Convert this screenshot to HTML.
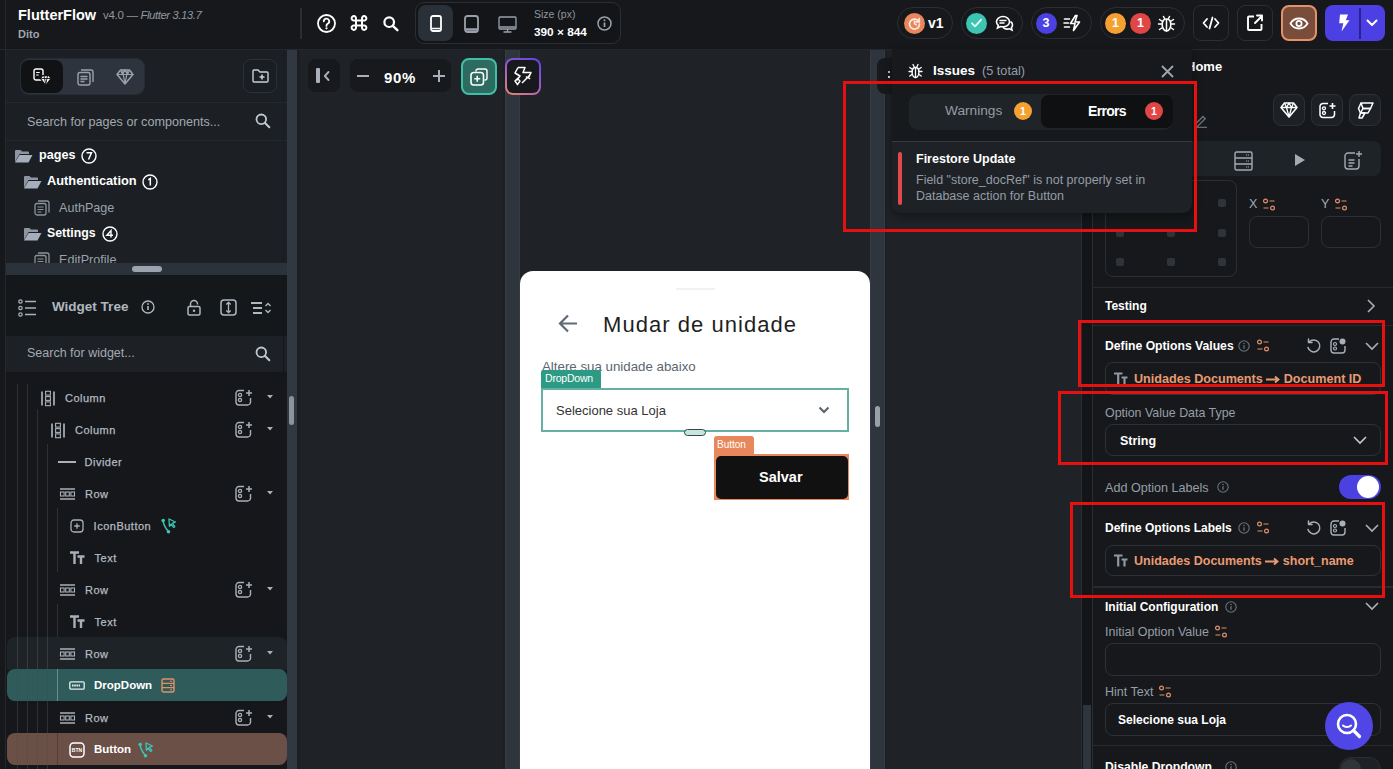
<!DOCTYPE html>
<html>
<head>
<meta charset="utf-8">
<style>
*{box-sizing:border-box;margin:0;padding:0}
html,body{width:1393px;height:769px;overflow:hidden;background:#16181b;font-family:"Liberation Sans",sans-serif;color:#fff}
.a{position:absolute}
.t{position:absolute;white-space:nowrap;line-height:1}
svg{position:absolute;overflow:visible}
</style>
</head>
<body>
<!-- TOP BAR -->
<div class="a" style="left:0;top:0;width:1393px;height:50px;background:#16181b;border-bottom:1px solid #24282d"></div>
<div class="a" style="left:5px;top:0;width:1px;height:769px;background:#25292e"></div>

<!-- LEFT PANEL -->
<div class="a" style="left:6px;top:50px;width:281px;height:213px;background:#1c2024"></div>
<div class="a" style="left:6px;top:102px;width:281px;height:1px;background:#24292e"></div>
<div class="a" style="left:6px;top:140px;width:281px;height:1px;background:#22272b"></div>
<div class="a" style="left:6px;top:263px;width:281px;height:12px;background:#2b323a"></div>
<div class="a" style="left:132px;top:266px;width:30px;height:6px;border-radius:3px;background:#9aa3ae"></div>
<div class="a" style="left:6px;top:275px;width:281px;height:61px;background:#15181b"></div>
<div class="a" style="left:6px;top:336px;width:281px;height:36px;background:#1d2125"></div>
<div class="a" style="left:6px;top:372px;width:281px;height:397px;background:#15171a"></div>
<div class="a" style="left:283px;top:50px;width:1px;height:213px;background:#181b1f"></div>
<div class="a" style="left:283px;top:275px;width:1px;height:97px;background:#121417"></div>
<!-- left scroll strip -->
<div class="a" style="left:287px;top:50px;width:10px;height:719px;background:#313842"></div>
<div class="a" style="left:289px;top:396px;width:5px;height:29px;border-radius:3px;background:#8b939d"></div>

<!-- CANVAS -->
<div class="a" style="left:297px;top:50px;width:785px;height:719px;background:#1f2327"></div>
<div class="a" style="left:297px;top:50px;width:3px;height:719px;background:#1b1f23"></div>
<div class="a" style="left:503px;top:50px;width:2px;height:719px;background:#1c2024"></div><div class="a" style="left:505px;top:50px;width:15px;height:719px;background:#2e353d;box-shadow:inset 1px 0 0 #353c45,inset -1px 0 0 #353c45"></div>
<div class="a" style="left:870px;top:50px;width:15px;height:719px;background:#2e353d;box-shadow:inset 1px 0 0 #353c45,inset -1px 0 0 #353c45"></div><div class="a" style="left:885px;top:50px;width:2px;height:719px;background:#1c2024"></div>
<div class="a" style="left:875px;top:406px;width:5px;height:21px;border-radius:3px;background:#9aa0a8"></div>
<div class="a" style="left:520px;top:271px;width:350px;height:520px;border-radius:13px;background:#fff"></div>

<!-- RIGHT PANEL -->
<div class="a" style="left:1081px;top:50px;width:1px;height:719px;background:#2a2e33"></div>
<div class="a" style="left:1082px;top:50px;width:10px;height:719px;background:#131518"></div>
<div class="a" style="left:1092px;top:50px;width:1px;height:719px;background:#2a2e33"></div>
<div class="a" style="left:1093px;top:50px;width:300px;height:719px;background:#16181b"></div>


<!-- TOPBAR CONTENT -->
<div class="t" style="left:18px;top:8px;font-size:14.5px;font-weight:700;color:#fff">FlutterFlow</div>
<div class="t" style="left:103px;top:10px;font-size:11.5px;color:#8f969e;letter-spacing:-0.3px">v4.0 — <i style="letter-spacing:-0.5px">Flutter 3.13.7</i></div>
<div class="t" style="left:18px;top:29px;font-size:11px;font-weight:700;color:#9ea5ae">Dito</div>
<div class="a" style="left:300px;top:8px;width:2px;height:31px;background:#2a2e33"></div>
<!-- help -->
<svg style="left:317px;top:14px" width="19" height="19" viewBox="0 0 19 19"><circle cx="9.5" cy="9.5" r="8.5" fill="none" stroke="#fff" stroke-width="1.8"/><path d="M6.8 7.3a2.7 2.7 0 1 1 3.9 2.4c-.8.4-1.2.9-1.2 1.7v.5" fill="none" stroke="#fff" stroke-width="1.8" stroke-linecap="round"/><circle cx="9.5" cy="14.3" r="1.1" fill="#fff"/></svg>
<!-- cmd -->
<svg style="left:350px;top:15px" width="18" height="16" viewBox="0 0 18 16"><path d="M6 5.5h6v5H6zM6 5.5V3.5a2.2 2.2 0 1 0-2.2 2H6M12 5.5V3.5a2.2 2.2 0 1 1 2.2 2H12M6 10.5v2a2.2 2.2 0 1 1-2.2-2H6M12 10.5v2a2.2 2.2 0 1 0 2.2-2H12" fill="none" stroke="#fff" stroke-width="2"/></svg>
<!-- search -->
<svg style="left:383px;top:16px" width="16" height="15" viewBox="0 0 16 15"><circle cx="6.2" cy="6.2" r="4.8" fill="none" stroke="#fff" stroke-width="2.2"/><path d="M9.8 9.8l4.6 4.4" stroke="#fff" stroke-width="2.4" stroke-linecap="round"/></svg>
<!-- device box -->
<div class="a" style="left:415px;top:2px;width:206px;height:42px;border-radius:9px;border:1.5px solid #2b2f35;background:#131518"></div>
<div class="a" style="left:418px;top:5px;width:35px;height:36px;border-radius:8px;background:#2a3038"></div>
<svg style="left:430px;top:15px" width="12" height="17" viewBox="0 0 12 17"><rect x="1" y="1" width="10" height="15" rx="2" fill="none" stroke="#fff" stroke-width="1.8"/><path d="M1.5 13.5h9" stroke="#fff" stroke-width="1.5"/></svg>
<svg style="left:464px;top:15px" width="15" height="18" viewBox="0 0 15 18"><rect x="1" y="1" width="13" height="16" rx="2.5" fill="none" stroke="#9aa1aa" stroke-width="1.8"/><path d="M1.5 14.5h12" stroke="#9aa1aa" stroke-width="2.5"/></svg>
<svg style="left:498px;top:16px" width="19" height="17" viewBox="0 0 19 17"><rect x="1" y="1" width="17" height="12" rx="1" fill="none" stroke="#9aa1aa" stroke-width="1.3"/><path d="M1.5 11h16M9.5 13v2.5M5.5 16h8" stroke="#9aa1aa" stroke-width="1.3"/></svg>
<div class="t" style="left:534px;top:9px;font-size:10.5px;color:#8f969e">Size (px)</div>
<div class="t" style="left:534px;top:27px;font-size:11.8px;font-weight:700;color:#fff">390 × 844</div>
<svg style="left:597px;top:16px" width="15" height="15" viewBox="0 0 15 15"><circle cx="7.5" cy="7.5" r="6.5" fill="none" stroke="#9aa1aa" stroke-width="1.5"/><path d="M7.5 6.5v4.5" stroke="#9aa1aa" stroke-width="1.8"/><circle cx="7.5" cy="4.3" r="1" fill="#9aa1aa"/></svg>

<!-- pills -->
<div class="a" style="left:897px;top:7px;width:56px;height:32px;border-radius:16px;border:1.5px solid #2a2e33"></div>
<div class="a" style="left:904px;top:12.5px;width:21px;height:21px;border-radius:50%;background:#e8865c"></div>
<svg style="left:908px;top:16.5px" width="13" height="13" viewBox="0 0 13 13"><path d="M10.8 4.5A5 5 0 1 0 11.5 7" fill="none" stroke="#fce8df" stroke-width="1.7" stroke-linecap="round"/><path d="M11.3 1.5v3.3H8" fill="none" stroke="#fce8df" stroke-width="1.7" stroke-linecap="round" stroke-linejoin="round"/><path d="M6.5 4v2.7l1.8 1.2" fill="none" stroke="#fce8df" stroke-width="1.5" stroke-linecap="round"/></svg>
<div class="t" style="left:928px;top:16px;font-size:14px;font-weight:700;color:#fff">v1</div>

<div class="a" style="left:961px;top:7px;width:62px;height:32px;border-radius:16px;border:1.5px solid #2a2e33"></div>
<div class="a" style="left:966px;top:12.5px;width:21px;height:21px;border-radius:50%;background:#3cc5b3"></div>
<svg style="left:970px;top:17px" width="13" height="12" viewBox="0 0 13 12"><path d="M2 6.3l3 3 6-6.5" fill="none" stroke="#e8fbf8" stroke-width="1.9" stroke-linecap="round" stroke-linejoin="round"/></svg>
<svg style="left:995px;top:15px" width="19" height="18" viewBox="0 0 19 18"><path d="M8 1.5c3.6 0 6.5 2.3 6.5 5.2s-2.9 5.2-6.5 5.2c-.8 0-1.6-.1-2.3-.3L2.5 13l.8-2.6C2.2 9.4 1.5 8.1 1.5 6.7 1.5 3.8 4.4 1.5 8 1.5z" fill="none" stroke="#fff" stroke-width="1.6"/><path d="M5 5.5h6M5 8h4" stroke="#fff" stroke-width="1.5" stroke-linecap="round"/><path d="M15.5 6.5c1.3.9 2 2.1 2 3.5 0 1-.4 1.9-1.1 2.7l.6 2.3-2.7-1.2c-.6.2-1.3.3-2 .3-1.7 0-3.2-.6-4.2-1.6" fill="none" stroke="#fff" stroke-width="1.6"/></svg>

<div class="a" style="left:1031px;top:7px;width:61px;height:32px;border-radius:16px;border:1.5px solid #2a2e33"></div>
<div class="a" style="left:1036px;top:12.5px;width:21px;height:21px;border-radius:50%;background:#4b40e2"></div>
<div class="t" style="left:1042.5px;top:17px;font-size:12.5px;font-weight:700;color:#fff">3</div>
<svg style="left:1063px;top:14px" width="20" height="18" viewBox="0 0 20 18"><path d="M12.5 1.5L7.5 9.5h4.5l-1.5 7 6-8.5h-4.5l2-6.5z" fill="none" stroke="#fff" stroke-width="1.6" stroke-linejoin="round"/><path d="M1.5 5h5M1 9h4.5M1.5 13h5" stroke="#fff" stroke-width="1.6" stroke-linecap="round"/></svg>

<div class="a" style="left:1100px;top:7px;width:85px;height:32px;border-radius:16px;border:1.5px solid #2a2e33"></div>
<div class="a" style="left:1105px;top:12.5px;width:21px;height:21px;border-radius:50%;background:#f5a132"></div>
<div class="t" style="left:1112px;top:17px;font-size:12.5px;font-weight:700;color:#fff">1</div>
<div class="a" style="left:1130px;top:12.5px;width:21px;height:21px;border-radius:50%;background:#e04646"></div>
<div class="t" style="left:1137px;top:17px;font-size:12.5px;font-weight:700;color:#fff">1</div>
<svg style="left:1157px;top:14px" width="19" height="19" viewBox="0 0 19 19"><path d="M9.5 5c2.5 0 4.3 2.2 4.3 5.5s-1.8 6.5-4.3 6.5-4.3-3.2-4.3-6.5S7 5 9.5 5z" fill="none" stroke="#fff" stroke-width="1.6"/><path d="M9.5 6v11M6.5 2.5l1.3 2.5M12.5 2.5l-1.3 2.5M1.5 10h3.7M13.8 10h3.7M2.5 5.5l3 2M16.5 5.5l-3 2M2.5 15.5l3-2M16.5 15.5l-3-2" stroke="#fff" stroke-width="1.5" stroke-linecap="round"/></svg>

<div class="a" style="left:1193px;top:5px;width:36px;height:36px;border-radius:8px;border:1.5px solid #2a2e33"></div>
<svg style="left:1202px;top:16px" width="18" height="14" viewBox="0 0 18 14"><path d="M5 3L1.5 7 5 11M13 3l3.5 4L13 11M10.5 1.5l-3 11" fill="none" stroke="#fff" stroke-width="1.8" stroke-linecap="round" stroke-linejoin="round"/></svg>
<div class="a" style="left:1237px;top:5px;width:36px;height:36px;border-radius:8px;border:1.5px solid #2a2e33"></div>
<svg style="left:1246px;top:14px" width="18" height="18" viewBox="0 0 18 18"><path d="M8 2.5H3a1 1 0 0 0-1 1v11.5a1 1 0 0 0 1 1h11.5a1 1 0 0 0 1-1V10" fill="none" stroke="#fff" stroke-width="1.9"/><path d="M9 9l7-7M11 1.5h5v5" fill="none" stroke="#fff" stroke-width="1.9" stroke-linecap="round" stroke-linejoin="round"/></svg>
<div class="a" style="left:1281px;top:5px;width:36px;height:36px;border-radius:8px;border:2px solid #e3936c;background:#7a4d3b"></div>
<svg style="left:1289px;top:17px" width="20" height="13" viewBox="0 0 20 13"><path d="M1.5 6.5C3.5 3 6.5 1.5 10 1.5s6.5 1.5 8.5 5c-2 3.5-5 5-8.5 5s-6.5-1.5-8.5-5z" fill="none" stroke="#fff" stroke-width="1.8"/><circle cx="10" cy="6.5" r="2.6" fill="none" stroke="#fff" stroke-width="1.8"/></svg>
<div class="a" style="left:1325px;top:5px;width:60px;height:36px;border-radius:8px;background:#4c40e4"></div>
<div class="a" style="left:1359px;top:8px;width:1.5px;height:31px;background:#2a228a"></div>
<svg style="left:1338px;top:14px" width="12" height="18" viewBox="0 0 12 18"><path d="M2 0.5h8L7.8 6.2H11.5L3.5 17.5 5.3 9.3H1.2z" fill="#fff"/></svg>
<svg style="left:1366px;top:19px" width="12" height="8" viewBox="0 0 12 8"><path d="M1.5 1.5L6 6l4.5-4.5" fill="none" stroke="#fff" stroke-width="2" stroke-linecap="round" stroke-linejoin="round"/></svg>


<!-- LEFT PANEL CONTENT -->
<div class="a" style="left:20px;top:58px;width:125px;height:37px;border-radius:9px;background:#2d343d;border:1px solid #262c33"></div>
<div class="a" style="left:21px;top:60px;width:42px;height:33px;border-radius:8px;background:#101214"></div>
<svg style="left:33px;top:68px" width="19" height="19" viewBox="0 0 19 19"><rect x="1" y="1" width="9" height="11" rx="2" fill="none" stroke="#fff" stroke-width="1.4"/><path d="M3.2 4.5h3.5M3.2 7h2.5" stroke="#fff" stroke-width="1.2"/><path d="M7.5 10.5l2-2.8h6.5l2 2.8-5.3 7z" fill="#fff" stroke="#101214" stroke-width="1.2"/><path d="M8.3 10.5h9M11 7.8l1.8 9M14.5 7.8l-1.8 9" stroke="#101214" stroke-width="0.9"/></svg>
<svg style="left:77px;top:69px" width="17" height="17" viewBox="0 0 17 17"><rect x="1" y="3.5" width="12" height="12.5" rx="2" fill="none" stroke="#9aa1aa" stroke-width="1.4"/><path d="M4 1h10a2 2 0 0 1 2 2v10" fill="none" stroke="#9aa1aa" stroke-width="1.4"/><path d="M3.5 7.5h7M3.5 10h7M3.5 12.5h4" stroke="#9aa1aa" stroke-width="1.3"/></svg>
<svg style="left:116px;top:69px" width="18" height="16" viewBox="0 0 18 16"><path d="M1 5.5L4.5 1h9L17 5.5 9 15z" fill="none" stroke="#9aa1aa" stroke-width="1.5" stroke-linejoin="round"/><path d="M1 5.5h16M6.5 1.5L9 15M11.5 1.5L9 15M4.5 1l2 4.5 2.5-4.5 2.5 4.5 2-4.5" fill="none" stroke="#9aa1aa" stroke-width="1.2" stroke-linejoin="round"/></svg>
<div class="a" style="left:243px;top:59px;width:34px;height:34px;border-radius:8px;border:1.5px solid #2c3138;background:#1a1e22"></div>
<svg style="left:252px;top:69px" width="17" height="14" viewBox="0 0 17 14"><path d="M1 2a1 1 0 0 1 1-1h4l2 2h7a1 1 0 0 1 1 1v8a1 1 0 0 1-1 1H2a1 1 0 0 1-1-1z" fill="none" stroke="#c8ced6" stroke-width="1.4"/><path d="M10 5.5v5M7.5 8h5" stroke="#c8ced6" stroke-width="1.6"/></svg>
<div class="t" style="left:27px;top:116px;font-size:12.6px;color:#a2a9b2">Search for pages or components...</div>
<svg style="left:255px;top:113px" width="16" height="16" viewBox="0 0 16 16"><circle cx="6.3" cy="6.3" r="4.8" fill="none" stroke="#c2c8d0" stroke-width="1.8"/><path d="M9.8 9.8l4.5 4.5" stroke="#c2c8d0" stroke-width="2" stroke-linecap="round"/></svg>

<svg style="left:14px;top:149px" width="19" height="14" viewBox="0 0 19 14"><path d="M1 13V2a1 1 0 0 1 1-1h4.5l1.5 1.5h6a1 1 0 0 1 1 1V5H5.5L1 13z" fill="#8c95a1"/><path d="M5.5 6h13L14.5 13.5H1z" fill="#a5aeba"/></svg>
<div class="t" style="left:39px;top:149px;font-size:12.6px;font-weight:700;color:#fff">pages</div>
<svg style="left:80.5px;top:148px" width="16" height="16" viewBox="0 0 16 16"><circle cx="8" cy="8" r="7" fill="none" stroke="#fff" stroke-width="1.4"/><path d="M5.5 4.8h5L7.5 11.5" fill="none" stroke="#fff" stroke-width="1.5"/></svg>
<svg style="left:22.5px;top:175px" width="19" height="14" viewBox="0 0 19 14"><path d="M1 13V2a1 1 0 0 1 1-1h4.5l1.5 1.5h6a1 1 0 0 1 1 1V5H5.5L1 13z" fill="#8c95a1"/><path d="M5.5 6h13L14.5 13.5H1z" fill="#a5aeba"/></svg>
<div class="t" style="left:47px;top:175px;font-size:12.8px;font-weight:700;color:#fff">Authentication</div>
<svg style="left:142px;top:173.5px" width="16" height="16" viewBox="0 0 16 16"><circle cx="8" cy="8" r="7" fill="none" stroke="#fff" stroke-width="1.4"/><path d="M6.3 5.8L8.3 4.5v7" fill="none" stroke="#fff" stroke-width="1.5"/></svg>
<svg style="left:34px;top:200px" width="16" height="16" viewBox="0 0 16 16"><rect x="1" y="3.5" width="11" height="11.5" rx="2" fill="none" stroke="#8a929c" stroke-width="1.3"/><path d="M4 1h9a2 2 0 0 1 2 2v9.5" fill="none" stroke="#8a929c" stroke-width="1.3"/><path d="M3.5 7h6M3.5 9.5h6M3.5 12h4" stroke="#8a929c" stroke-width="1.2"/></svg>
<div class="t" style="left:59px;top:202px;font-size:12.6px;color:#9ba2ab">AuthPage</div>
<svg style="left:22.5px;top:227px" width="19" height="14" viewBox="0 0 19 14"><path d="M1 13V2a1 1 0 0 1 1-1h4.5l1.5 1.5h6a1 1 0 0 1 1 1V5H5.5L1 13z" fill="#8c95a1"/><path d="M5.5 6h13L14.5 13.5H1z" fill="#a5aeba"/></svg>
<div class="t" style="left:47px;top:227px;font-size:12.3px;font-weight:700;color:#fff">Settings</div>
<svg style="left:101.5px;top:225.5px" width="16" height="16" viewBox="0 0 16 16"><circle cx="8" cy="8" r="7" fill="none" stroke="#fff" stroke-width="1.4"/><path d="M9 11.5V4.5L4.8 9.3h6.2" fill="none" stroke="#fff" stroke-width="1.4"/></svg>
<div class="a" style="left:6px;top:248px;width:281px;height:15px;overflow:hidden">
<svg style="left:28px;top:4px" width="16" height="16" viewBox="0 0 16 16"><rect x="1" y="3.5" width="11" height="11.5" rx="2" fill="none" stroke="#8a929c" stroke-width="1.3"/><path d="M4 1h9a2 2 0 0 1 2 2v9.5" fill="none" stroke="#8a929c" stroke-width="1.3"/><path d="M3.5 7h6M3.5 9.5h6M3.5 12h4" stroke="#8a929c" stroke-width="1.2"/></svg>
<div class="t" style="left:53px;top:6px;font-size:12.6px;color:#9ba2ab">EditProfile</div>
</div>

<!-- widget tree header -->
<svg style="left:18px;top:299px" width="19" height="18" viewBox="0 0 19 18"><circle cx="2.5" cy="2.5" r="1.7" fill="none" stroke="#a9b0b9" stroke-width="1.2"/><circle cx="2.5" cy="9" r="1.7" fill="none" stroke="#a9b0b9" stroke-width="1.2"/><circle cx="2.5" cy="15.5" r="1.7" fill="none" stroke="#a9b0b9" stroke-width="1.2"/><path d="M7 2.5h11M7 9h11M7 15.5h11" stroke="#a9b0b9" stroke-width="1.6"/></svg>
<div class="t" style="left:52px;top:300px;font-size:13.5px;font-weight:700;color:#b0b7c0">Widget Tree</div>
<svg style="left:141px;top:300px" width="14" height="14" viewBox="0 0 14 14"><circle cx="7" cy="7" r="6" fill="none" stroke="#b0b7c0" stroke-width="1.3"/><path d="M7 6v4" stroke="#b0b7c0" stroke-width="1.6"/><circle cx="7" cy="4" r=".9" fill="#b0b7c0"/></svg>
<svg style="left:187px;top:299px" width="14" height="17" viewBox="0 0 14 17"><rect x="1" y="7.5" width="12" height="8.5" rx="1.5" fill="none" stroke="#b0b7c0" stroke-width="1.5"/><path d="M3.5 7.5V5a3.5 3.5 0 0 1 7 0v.5" fill="none" stroke="#b0b7c0" stroke-width="1.5"/><circle cx="7" cy="11.7" r="1.2" fill="#b0b7c0"/></svg>
<svg style="left:219.5px;top:299px" width="17" height="17" viewBox="0 0 17 17"><rect x="1" y="1" width="15" height="15" rx="3" fill="none" stroke="#b0b7c0" stroke-width="1.5"/><path d="M8.5 3.5v10M6.3 5.5l2.2-2.2 2.2 2.2M6.3 11.5l2.2 2.2 2.2-2.2" fill="none" stroke="#b0b7c0" stroke-width="1.3"/></svg>
<svg style="left:250px;top:300px" width="22" height="16" viewBox="0 0 22 16"><path d="M1 3h11M3 8h9M3 13h9" stroke="#b0b7c0" stroke-width="1.8"/><path d="M15.5 6L18 3.5 20.5 6M15.5 10l2.5 2.5 2.5-2.5" fill="none" stroke="#b0b7c0" stroke-width="1.4"/></svg>
<div class="t" style="left:27px;top:347px;font-size:12.5px;color:#a2a9b2">Search for widget...</div>
<svg style="left:255px;top:346px" width="16" height="16" viewBox="0 0 16 16"><circle cx="6.3" cy="6.3" r="4.8" fill="none" stroke="#c2c8d0" stroke-width="1.8"/><path d="M9.8 9.8l4.5 4.5" stroke="#c2c8d0" stroke-width="2" stroke-linecap="round"/></svg>


<!-- TREE -->
<div class="a" style="left:7px;top:637px;width:280px;height:33px;border-radius:8px 8px 0 0;background:#1d2327"></div>
<div class="a" style="left:7px;top:669px;width:280px;height:32px;border-radius:8px;background:#2f5b5b"></div>
<div class="a" style="left:7px;top:733px;width:280px;height:32px;border-radius:8px;background:#6b5048"></div>
<div class="a" style="left:17px;top:384px;width:1px;height:385px;background:rgba(255,255,255,0.11)"></div><div class="a" style="left:27px;top:384px;width:1px;height:385px;background:rgba(255,255,255,0.11)"></div><div class="a" style="left:37px;top:409px;width:1px;height:360px;background:rgba(255,255,255,0.11)"></div><div class="a" style="left:47px;top:444px;width:1px;height:325px;background:rgba(255,255,255,0.11)"></div><div class="a" style="left:57px;top:508px;width:1px;height:64px;background:rgba(255,255,255,0.11)"></div><div class="a" style="left:57px;top:604px;width:1px;height:33px;background:rgba(255,255,255,0.11)"></div><div class="a" style="left:57px;top:669px;width:1px;height:32px;background:rgba(255,255,255,0.3)"></div>
<svg style="left:41px;top:390px" width="14" height="17" viewBox="0 0 14 17"><path d="M1 1.5v14M13 1.5v14" stroke="#a9b0b9" stroke-width="1.7"/><rect x="4.6" y="1.3" width="4.8" height="3.8" fill="none" stroke="#a9b0b9" stroke-width="1.1"/><rect x="4.6" y="6.6" width="4.8" height="3.8" fill="none" stroke="#a9b0b9" stroke-width="1.1"/><rect x="4.6" y="11.9" width="4.8" height="3.8" fill="none" stroke="#a9b0b9" stroke-width="1.1"/></svg><div class="t" style="left:65px;top:392.5px;font-size:11px;letter-spacing:0.5px;-webkit-text-stroke:0.25px #b3bac2;color:#b3bac2">Column</div><svg style="left:234.5px;top:389px" width="18" height="17" viewBox="0 0 18 17"><path d="M9 1.5H4a3 3 0 0 0-3 3V13a3 3 0 0 0 3 3h8.5a3 3 0 0 0 3-3V9" fill="none" stroke="#a9b0b9" stroke-width="1.4"/><circle cx="5" cy="6" r="1.6" fill="none" stroke="#a9b0b9" stroke-width="1.3"/><circle cx="5" cy="11" r="1.6" fill="none" stroke="#a9b0b9" stroke-width="1.3"/><path d="M14 1v6M11 4h6" stroke="#a9b0b9" stroke-width="1.5"/></svg><svg style="left:266.5px;top:395px" width="6" height="4" viewBox="0 0 6 4"><path d="M0 0h6L3 3.5z" fill="#a9b0b9"/></svg>
<svg style="left:51px;top:422px" width="14" height="17" viewBox="0 0 14 17"><path d="M1 1.5v14M13 1.5v14" stroke="#a9b0b9" stroke-width="1.7"/><rect x="4.6" y="1.3" width="4.8" height="3.8" fill="none" stroke="#a9b0b9" stroke-width="1.1"/><rect x="4.6" y="6.6" width="4.8" height="3.8" fill="none" stroke="#a9b0b9" stroke-width="1.1"/><rect x="4.6" y="11.9" width="4.8" height="3.8" fill="none" stroke="#a9b0b9" stroke-width="1.1"/></svg><div class="t" style="left:75px;top:424.5px;font-size:11px;letter-spacing:0.5px;-webkit-text-stroke:0.25px #b3bac2;color:#b3bac2">Column</div><svg style="left:234.5px;top:421px" width="18" height="17" viewBox="0 0 18 17"><path d="M9 1.5H4a3 3 0 0 0-3 3V13a3 3 0 0 0 3 3h8.5a3 3 0 0 0 3-3V9" fill="none" stroke="#a9b0b9" stroke-width="1.4"/><circle cx="5" cy="6" r="1.6" fill="none" stroke="#a9b0b9" stroke-width="1.3"/><circle cx="5" cy="11" r="1.6" fill="none" stroke="#a9b0b9" stroke-width="1.3"/><path d="M14 1v6M11 4h6" stroke="#a9b0b9" stroke-width="1.5"/></svg><svg style="left:266.5px;top:427px" width="6" height="4" viewBox="0 0 6 4"><path d="M0 0h6L3 3.5z" fill="#a9b0b9"/></svg>
<div class="a" style="left:58px;top:461px;width:18px;height:2px;background:#a9b0b9"></div><div class="t" style="left:84.5px;top:456.5px;font-size:11px;letter-spacing:0.5px;-webkit-text-stroke:0.25px #b3bac2;color:#b3bac2">Divider</div>
<svg style="left:59px;top:488px" width="17" height="12" viewBox="0 0 17 12"><path d="M1 1h15M1 11h15" stroke="#a9b0b9" stroke-width="1.6"/><rect x="1.5" y="4" width="3.6" height="4" fill="none" stroke="#a9b0b9" stroke-width="1.1"/><rect x="6.7" y="4" width="3.6" height="4" fill="none" stroke="#a9b0b9" stroke-width="1.1"/><rect x="11.9" y="4" width="3.6" height="4" fill="none" stroke="#a9b0b9" stroke-width="1.1"/></svg><div class="t" style="left:85px;top:488.5px;font-size:11px;letter-spacing:0.5px;-webkit-text-stroke:0.25px #b3bac2;color:#b3bac2">Row</div><svg style="left:234.5px;top:485px" width="18" height="17" viewBox="0 0 18 17"><path d="M9 1.5H4a3 3 0 0 0-3 3V13a3 3 0 0 0 3 3h8.5a3 3 0 0 0 3-3V9" fill="none" stroke="#a9b0b9" stroke-width="1.4"/><circle cx="5" cy="6" r="1.6" fill="none" stroke="#a9b0b9" stroke-width="1.3"/><circle cx="5" cy="11" r="1.6" fill="none" stroke="#a9b0b9" stroke-width="1.3"/><path d="M14 1v6M11 4h6" stroke="#a9b0b9" stroke-width="1.5"/></svg><svg style="left:266.5px;top:491px" width="6" height="4" viewBox="0 0 6 4"><path d="M0 0h6L3 3.5z" fill="#a9b0b9"/></svg>
<svg style="left:70px;top:519px" width="14" height="14" viewBox="0 0 14 14"><rect x="1" y="1" width="12" height="12" rx="3" fill="none" stroke="#a9b0b9" stroke-width="1.3"/><path d="M7 4.3v5.4M4.3 7h5.4" stroke="#a9b0b9" stroke-width="1.3"/></svg><div class="t" style="left:93.6px;top:520.5px;font-size:11px;letter-spacing:0.5px;-webkit-text-stroke:0.25px #b3bac2;color:#b3bac2">IconButton</div>
<svg style="left:69px;top:551px" width="16" height="14" viewBox="0 0 16 14"><path d="M1 1.5h9M5.5 1.5V13M8.5 5.5h7M12 5.5V13" stroke="#a9b0b9" stroke-width="2.4"/></svg><div class="t" style="left:94.6px;top:552.5px;font-size:11px;letter-spacing:0.5px;-webkit-text-stroke:0.25px #b3bac2;color:#b3bac2">Text</div>
<svg style="left:59px;top:584px" width="17" height="12" viewBox="0 0 17 12"><path d="M1 1h15M1 11h15" stroke="#a9b0b9" stroke-width="1.6"/><rect x="1.5" y="4" width="3.6" height="4" fill="none" stroke="#a9b0b9" stroke-width="1.1"/><rect x="6.7" y="4" width="3.6" height="4" fill="none" stroke="#a9b0b9" stroke-width="1.1"/><rect x="11.9" y="4" width="3.6" height="4" fill="none" stroke="#a9b0b9" stroke-width="1.1"/></svg><div class="t" style="left:85px;top:584.5px;font-size:11px;letter-spacing:0.5px;-webkit-text-stroke:0.25px #b3bac2;color:#b3bac2">Row</div><svg style="left:234.5px;top:581px" width="18" height="17" viewBox="0 0 18 17"><path d="M9 1.5H4a3 3 0 0 0-3 3V13a3 3 0 0 0 3 3h8.5a3 3 0 0 0 3-3V9" fill="none" stroke="#a9b0b9" stroke-width="1.4"/><circle cx="5" cy="6" r="1.6" fill="none" stroke="#a9b0b9" stroke-width="1.3"/><circle cx="5" cy="11" r="1.6" fill="none" stroke="#a9b0b9" stroke-width="1.3"/><path d="M14 1v6M11 4h6" stroke="#a9b0b9" stroke-width="1.5"/></svg><svg style="left:266.5px;top:587px" width="6" height="4" viewBox="0 0 6 4"><path d="M0 0h6L3 3.5z" fill="#a9b0b9"/></svg>
<svg style="left:69px;top:615px" width="16" height="14" viewBox="0 0 16 14"><path d="M1 1.5h9M5.5 1.5V13M8.5 5.5h7M12 5.5V13" stroke="#a9b0b9" stroke-width="2.4"/></svg><div class="t" style="left:94.6px;top:616.5px;font-size:11px;letter-spacing:0.5px;-webkit-text-stroke:0.25px #b3bac2;color:#b3bac2">Text</div>
<svg style="left:59px;top:648px" width="17" height="12" viewBox="0 0 17 12"><path d="M1 1h15M1 11h15" stroke="#a9b0b9" stroke-width="1.6"/><rect x="1.5" y="4" width="3.6" height="4" fill="none" stroke="#a9b0b9" stroke-width="1.1"/><rect x="6.7" y="4" width="3.6" height="4" fill="none" stroke="#a9b0b9" stroke-width="1.1"/><rect x="11.9" y="4" width="3.6" height="4" fill="none" stroke="#a9b0b9" stroke-width="1.1"/></svg><div class="t" style="left:85px;top:648.5px;font-size:11px;letter-spacing:0.5px;-webkit-text-stroke:0.25px #b3bac2;color:#b3bac2">Row</div><svg style="left:234.5px;top:645px" width="18" height="17" viewBox="0 0 18 17"><path d="M9 1.5H4a3 3 0 0 0-3 3V13a3 3 0 0 0 3 3h8.5a3 3 0 0 0 3-3V9" fill="none" stroke="#a9b0b9" stroke-width="1.4"/><circle cx="5" cy="6" r="1.6" fill="none" stroke="#a9b0b9" stroke-width="1.3"/><circle cx="5" cy="11" r="1.6" fill="none" stroke="#a9b0b9" stroke-width="1.3"/><path d="M14 1v6M11 4h6" stroke="#a9b0b9" stroke-width="1.5"/></svg><svg style="left:266.5px;top:651px" width="6" height="4" viewBox="0 0 6 4"><path d="M0 0h6L3 3.5z" fill="#a9b0b9"/></svg>
<svg style="left:69px;top:681px" width="16" height="9" viewBox="0 0 16 9"><rect x="0.8" y="0.8" width="14.4" height="7.4" rx="1.2" fill="none" stroke="#e6eeee" stroke-width="1.3"/><path d="M3 4.5h8" stroke="#e6eeee" stroke-width="2.2" stroke-dasharray="1.6 .6"/></svg><div class="t" style="left:94px;top:679.5px;font-size:11.5px;font-weight:700;color:#fff">DropDown</div>
<svg style="left:59px;top:712px" width="17" height="12" viewBox="0 0 17 12"><path d="M1 1h15M1 11h15" stroke="#a9b0b9" stroke-width="1.6"/><rect x="1.5" y="4" width="3.6" height="4" fill="none" stroke="#a9b0b9" stroke-width="1.1"/><rect x="6.7" y="4" width="3.6" height="4" fill="none" stroke="#a9b0b9" stroke-width="1.1"/><rect x="11.9" y="4" width="3.6" height="4" fill="none" stroke="#a9b0b9" stroke-width="1.1"/></svg><div class="t" style="left:85px;top:712.5px;font-size:11px;letter-spacing:0.5px;-webkit-text-stroke:0.25px #b3bac2;color:#b3bac2">Row</div><svg style="left:234.5px;top:709px" width="18" height="17" viewBox="0 0 18 17"><path d="M9 1.5H4a3 3 0 0 0-3 3V13a3 3 0 0 0 3 3h8.5a3 3 0 0 0 3-3V9" fill="none" stroke="#a9b0b9" stroke-width="1.4"/><circle cx="5" cy="6" r="1.6" fill="none" stroke="#a9b0b9" stroke-width="1.3"/><circle cx="5" cy="11" r="1.6" fill="none" stroke="#a9b0b9" stroke-width="1.3"/><path d="M14 1v6M11 4h6" stroke="#a9b0b9" stroke-width="1.5"/></svg><svg style="left:266.5px;top:715px" width="6" height="4" viewBox="0 0 6 4"><path d="M0 0h6L3 3.5z" fill="#a9b0b9"/></svg>
<svg style="left:69px;top:742px" width="16" height="16" viewBox="0 0 16 16"><rect x="1" y="1" width="14" height="14" rx="3.5" fill="none" stroke="#fff" stroke-width="1.5"/><text x="8" y="10" font-family="Liberation Sans" font-size="5" font-weight="700" fill="#fff" text-anchor="middle">BTN</text></svg><div class="t" style="left:94px;top:743.5px;font-size:11.5px;font-weight:700;color:#fff">Button</div>
<svg style="left:161px;top:518px" width="16" height="16" viewBox="0 0 16 16"><circle cx="2.2" cy="2.5" r="1.8" fill="#3cc5b3"/><circle cx="7.5" cy="13.7" r="1.8" fill="#3cc5b3"/><path d="M2.2 2.5c0 4 1 6 5.3 11.2" fill="none" stroke="#3cc5b3" stroke-width="1.5"/><path d="M8 1l6.5 3-3 1.2 2.3 3.5-1.3.8-2.3-3.5-1.8 2.3z" fill="none" stroke="#3cc5b3" stroke-width="1.3" stroke-linejoin="round"/></svg>
<svg style="left:138px;top:742px" width="16" height="16" viewBox="0 0 16 16"><circle cx="2.2" cy="2.5" r="1.8" fill="#3cc5b3"/><circle cx="7.5" cy="13.7" r="1.8" fill="#3cc5b3"/><path d="M2.2 2.5c0 4 1 6 5.3 11.2" fill="none" stroke="#3cc5b3" stroke-width="1.5"/><path d="M8 1l6.5 3-3 1.2 2.3 3.5-1.3.8-2.3-3.5-1.8 2.3z" fill="none" stroke="#3cc5b3" stroke-width="1.3" stroke-linejoin="round"/></svg>
<div class="a" style="left:17px;top:669px;width:1px;height:32px;background:rgba(0,0,0,0.22)"></div><div class="a" style="left:17px;top:733px;width:1px;height:32px;background:rgba(0,0,0,0.22)"></div><div class="a" style="left:27px;top:669px;width:1px;height:32px;background:rgba(0,0,0,0.22)"></div><div class="a" style="left:27px;top:733px;width:1px;height:32px;background:rgba(0,0,0,0.22)"></div><div class="a" style="left:37px;top:669px;width:1px;height:32px;background:rgba(0,0,0,0.22)"></div><div class="a" style="left:37px;top:733px;width:1px;height:32px;background:rgba(0,0,0,0.22)"></div><div class="a" style="left:47px;top:669px;width:1px;height:32px;background:rgba(0,0,0,0.22)"></div><div class="a" style="left:47px;top:733px;width:1px;height:32px;background:rgba(0,0,0,0.22)"></div><div class="a" style="left:57px;top:733px;width:1px;height:32px;background:rgba(0,0,0,0.22)"></div>
<svg style="left:161px;top:678px" width="14" height="15" viewBox="0 0 14 15"><rect x="1" y="1" width="12" height="13" rx="1.5" fill="none" stroke="#e39068" stroke-width="1.4"/><path d="M1 5.3h12M1 9.7h12" stroke="#e39068" stroke-width="1.3"/><path d="M9 3.2h2M9 7.5h2M9 11.8h2" stroke="#e39068" stroke-width="1"/></svg>


<!-- CANVAS CONTROLS -->
<div class="a" style="left:308px;top:59px;width:32px;height:33px;border-radius:8px;background:#17191c"></div>
<div class="a" style="left:316px;top:68px;width:4px;height:15px;border-radius:1px;background:#a9b0b9"></div>
<svg style="left:323px;top:71px" width="7" height="10" viewBox="0 0 7 10"><path d="M5.5 1L1.8 5l3.7 4" fill="none" stroke="#a9b0b9" stroke-width="1.9" stroke-linecap="round" stroke-linejoin="round"/></svg>
<div class="a" style="left:350px;top:59px;width:101px;height:33px;border-radius:8px;background:#17191c"></div>
<div class="a" style="left:357px;top:75px;width:12px;height:2px;background:#a9b0b9"></div>
<div class="t" style="left:384px;top:70px;font-size:15px;font-weight:700;color:#fff;letter-spacing:0.6px">90%</div>
<svg style="left:433px;top:70px" width="12" height="12" viewBox="0 0 12 12"><path d="M6 0v12M0 6h12" stroke="#a9b0b9" stroke-width="2"/></svg>
<div class="a" style="left:461px;top:58px;width:36px;height:37px;border-radius:8px;background:#2d6a60;border:2px solid #3ec0a7"></div>
<svg style="left:470px;top:68px" width="18" height="18" viewBox="0 0 18 18"><path d="M6 3.5V3a2 2 0 0 1 2-2h7a2 2 0 0 1 2 2v7a2 2 0 0 1-2 2h-.5" fill="none" stroke="#fff" stroke-width="1.4"/><rect x="1" y="4.5" width="12.5" height="12.5" rx="2.8" fill="#2d6a60" stroke="#fff" stroke-width="1.6"/><path d="M7.25 7.8v6M4.25 10.75h6" stroke="#fff" stroke-width="1.6"/></svg>
<div class="a" style="left:505px;top:58px;width:36px;height:37px;border-radius:8px;background:linear-gradient(30deg,#e8866a,#8e54d6 60%,#5a45e0);padding:2px"><div style="width:100%;height:100%;border-radius:6px;background:#17191c"></div></div>
<svg style="left:513px;top:66px" width="20" height="20" viewBox="0 0 20 20"><path d="M5 1.5h7l-2 5h8l-3 6" fill="none" stroke="#fff" stroke-width="1.5" stroke-linejoin="round"/><path d="M5 1.5L2 7l5 3-3.5 4.5" fill="none" stroke="#fff" stroke-width="1.5" stroke-linejoin="round"/><path d="M2 15l2.5-2.5L7 15l-2.5 3.5z" fill="none" stroke="#fff" stroke-width="1.4"/><path d="M9 17l8-8M13 10.5l1.5 1.5M16 12l1 1" stroke="#fff" stroke-width="1.5"/></svg>

<!-- PHONE CONTENT -->
<div class="a" style="left:676px;top:288px;width:39px;height:2px;border-radius:1px;background:#f1f1f1"></div>
<svg style="left:558px;top:314px" width="20" height="19" viewBox="0 0 20 19"><path d="M19 9.5H2.5M10 1.5L2 9.5l8 8" fill="none" stroke="#5f6b77" stroke-width="2.2" stroke-linejoin="miter"/></svg>
<div class="t" style="left:603px;top:314px;font-size:22px;color:#1f1f1f;letter-spacing:1.05px">Mudar de unidade</div>
<div class="t" style="left:542px;top:360px;font-size:13.3px;color:#5b6670">Altere sua unidade abaixo</div>
<div class="a" style="left:541px;top:370px;width:60px;height:18px;background:#2d9a85;border-radius:2px 2px 0 0"></div>
<div class="t" style="left:545px;top:373px;font-size:10.5px;color:#fff;letter-spacing:-0.2px">DropDown</div>
<div class="a" style="left:541px;top:388px;width:308px;height:44px;border:2px solid #66b0a3;background:#fff"></div>
<div class="t" style="left:556px;top:404px;font-size:13px;color:#333">Selecione sua Loja</div>
<svg style="left:818px;top:406px" width="12" height="8" viewBox="0 0 12 8"><path d="M1.5 1.5L6 6l4.5-4.5" fill="none" stroke="#57636c" stroke-width="2"/></svg>
<div class="a" style="left:684px;top:429px;width:22px;height:7px;border-radius:4px;background:#c9e4de;border:1px solid #2d4d47"></div>
<div class="a" style="left:714px;top:436px;width:40px;height:19px;background:#e8875b;border-radius:3px 3px 0 0"></div>
<div class="t" style="left:717px;top:440px;font-size:10px;color:#fff">Button</div>
<div class="a" style="left:714px;top:454px;width:135px;height:46px;background:#e8875b;padding:1.5px"><div style="width:100%;height:100%;background:#111;border-radius:5px"></div></div>
<div class="t" style="left:759px;top:470px;font-size:14.5px;font-weight:700;color:#fff">Salvar</div>


<!-- RIGHT PANEL CONTENT -->
<div class="t" style="left:1186px;top:60px;font-size:13px;font-weight:700;color:#fff">Home</div>
<svg style="left:1193px;top:114px" width="15" height="14" viewBox="0 0 15 14"><path d="M2 10.5L10 2.5l2.2 2.2-8 8H2z" fill="none" stroke="#6c747d" stroke-width="1.3"/><path d="M1 13.3h13" stroke="#6c747d" stroke-width="1.2"/></svg>
<div class="a" style="left:1273px;top:94px;width:32px;height:32px;border-radius:8px;border:1.5px solid #2c3138;background:#1d2125"></div>
<div class="a" style="left:1311px;top:94px;width:32px;height:32px;border-radius:8px;border:1.5px solid #2c3138;background:#1d2125"></div>
<div class="a" style="left:1349px;top:94px;width:32px;height:32px;border-radius:8px;border:1.5px solid #2c3138;background:#1d2125"></div>
<svg style="left:1280px;top:102px" width="18" height="16" viewBox="0 0 18 16"><path d="M1 5.5L4.5 1h9L17 5.5 9 15z" fill="none" stroke="#fff" stroke-width="1.6" stroke-linejoin="round"/><path d="M1 5.5h16M4.5 1l2 4.5L9 15M13.5 1l-2 4.5L9 15M6.5 5.5L9 1l2.5 4.5" fill="none" stroke="#fff" stroke-width="1.3" stroke-linejoin="round"/></svg>
<svg style="left:1319px;top:102px" width="17" height="17" viewBox="0 0 17 17"><path d="M9 1.5H4a3 3 0 0 0-3 3v8a3 3 0 0 0 3 3h8.5a3 3 0 0 0 3-3V9" fill="none" stroke="#fff" stroke-width="1.5"/><circle cx="5" cy="6.3" r="1.5" fill="none" stroke="#fff" stroke-width="1.3"/><circle cx="5" cy="11" r="1.5" fill="none" stroke="#fff" stroke-width="1.3"/><path d="M13.5 1v6M10.5 4h6" stroke="#fff" stroke-width="1.6"/></svg>
<svg style="left:1357px;top:102px" width="17" height="17" viewBox="0 0 17 17"><path d="M4 1h12l-2.5 5.5H6z" fill="none" stroke="#fff" stroke-width="1.5" stroke-linejoin="round"/><path d="M6 6.5h7.5L11 11H3.5z" fill="none" stroke="#fff" stroke-width="1.5" stroke-linejoin="round"/><path d="M3.5 11H8l-3 5H2z" fill="none" stroke="#fff" stroke-width="1.5" stroke-linejoin="round"/><path d="M4 1L1.5 6.5l2 4.5" fill="none" stroke="#fff" stroke-width="1.5"/></svg>
<div class="a" style="left:1093px;top:141px;width:288px;height:35px;border-radius:8px;background:#1e2327"></div>
<svg style="left:1234px;top:151px" width="19" height="20" viewBox="0 0 19 20"><rect x="1" y="1" width="17" height="18" rx="1.5" fill="none" stroke="#a3aab3" stroke-width="1.4"/><path d="M1 7h17M1 13h17" stroke="#a3aab3" stroke-width="1.4"/><path d="M12 4h3M12 10h3M12 16h3" stroke="#a3aab3" stroke-width="1.2" stroke-dasharray="1.2 .8"/></svg>
<svg style="left:1294px;top:153px" width="11" height="14" viewBox="0 0 11 14"><path d="M1 1l10 6-10 6z" fill="#a3aab3"/></svg>
<svg style="left:1344px;top:150px" width="19" height="20" viewBox="0 0 19 20"><path d="M11 3H4a3 3 0 0 0-3 3v10a3 3 0 0 0 3 3h8a3 3 0 0 0 3-3V9" fill="none" stroke="#a3aab3" stroke-width="1.4"/><path d="M4.5 10h6M4.5 13h6M4.5 16h4" stroke="#a3aab3" stroke-width="1.3"/><path d="M15 1v6M12 4h6" stroke="#a3aab3" stroke-width="1.4"/></svg>
<div class="a" style="left:1105px;top:180px;width:132px;height:97px;border-radius:8px;border:1.5px solid #2a2e33"></div>
<div class="a" style="left:1116px;top:199px;width:8px;height:8px;border-radius:2px;background:#2f343a"></div>
<div class="a" style="left:1116px;top:229px;width:8px;height:8px;border-radius:2px;background:#2f343a"></div>
<div class="a" style="left:1116px;top:258px;width:8px;height:8px;border-radius:2px;background:#2f343a"></div>
<div class="a" style="left:1167px;top:199px;width:8px;height:8px;border-radius:2px;background:#2f343a"></div>
<div class="a" style="left:1167px;top:229px;width:8px;height:8px;border-radius:2px;background:#2f343a"></div>
<div class="a" style="left:1167px;top:258px;width:8px;height:8px;border-radius:2px;background:#2f343a"></div>
<div class="a" style="left:1218px;top:199px;width:8px;height:8px;border-radius:2px;background:#2f343a"></div>
<div class="a" style="left:1218px;top:229px;width:8px;height:8px;border-radius:2px;background:#2f343a"></div>
<div class="a" style="left:1218px;top:258px;width:8px;height:8px;border-radius:2px;background:#2f343a"></div>
<div class="t" style="left:1249px;top:198px;font-size:12.5px;color:#a3aab3">X</div>
<svg style="left:1262px;top:198px" width="14" height="13" viewBox="0 0 14 13"><circle cx="3.5" cy="3" r="1.9" fill="none" stroke="#e3906a" stroke-width="1.2"/><circle cx="10.5" cy="10" r="1.9" fill="none" stroke="#e3906a" stroke-width="1.2"/><path d="M7.5 3h5M1.5 10h5" stroke="#e3906a" stroke-width="1.2"/></svg>
<div class="t" style="left:1321px;top:198px;font-size:12.5px;color:#a3aab3">Y</div>
<svg style="left:1334px;top:198px" width="14" height="13" viewBox="0 0 14 13"><circle cx="3.5" cy="3" r="1.9" fill="none" stroke="#e3906a" stroke-width="1.2"/><circle cx="10.5" cy="10" r="1.9" fill="none" stroke="#e3906a" stroke-width="1.2"/><path d="M7.5 3h5M1.5 10h5" stroke="#e3906a" stroke-width="1.2"/></svg>
<div class="a" style="left:1249px;top:216px;width:60px;height:32px;border-radius:8px;border:1.5px solid #2c3036"></div>
<div class="a" style="left:1321px;top:216px;width:60px;height:32px;border-radius:8px;border:1.5px solid #2c3036"></div>
<div class="a" style="left:1093px;top:287px;width:300px;height:1px;background:#262a2f"></div>
<div class="t" style="left:1105px;top:300px;font-size:12px;font-weight:700;color:#fff">Testing</div>
<svg style="left:1367px;top:299px" width="8" height="14" viewBox="0 0 8 14"><path d="M1 1l6 6-6 6" fill="none" stroke="#a9b0b9" stroke-width="1.6"/></svg>
<div class="a" style="left:1093px;top:325px;width:300px;height:1px;background:#262a2f"></div>
<div class="t" style="left:1105px;top:340px;font-size:12.2px;font-weight:700;color:#fff">Define Options Values</div>
<svg style="left:1238px;top:340px" width="12" height="12" viewBox="0 0 12 12"><circle cx="6" cy="6" r="5.2" fill="none" stroke="#6b737c" stroke-width="1.1"/><path d="M6 5.2v3.6" stroke="#6b737c" stroke-width="1.3"/><circle cx="6" cy="3.4" r=".75" fill="#6b737c"/></svg><svg style="left:1256px;top:339px" width="14" height="13" viewBox="0 0 14 13"><circle cx="3.5" cy="3" r="1.9" fill="none" stroke="#e3906a" stroke-width="1.2"/><circle cx="10.5" cy="10" r="1.9" fill="none" stroke="#e3906a" stroke-width="1.2"/><path d="M7.5 3h5M1.5 10h5" stroke="#e3906a" stroke-width="1.2"/></svg><svg style="left:1306px;top:338px" width="15" height="15" viewBox="0 0 15 15"><path d="M3.2 4A6 6 0 1 1 2 9.5" fill="none" stroke="#a9b0b9" stroke-width="1.5" stroke-linecap="round"/><path d="M2.5 1v3.5H6" fill="none" stroke="#a9b0b9" stroke-width="1.5" stroke-linecap="round" stroke-linejoin="round"/></svg><svg style="left:1330px;top:338px" width="16" height="16" viewBox="0 0 16 16"><path d="M9 1H4a3 3 0 0 0-3 3v8a3 3 0 0 0 3 3h8a3 3 0 0 0 3-3V8" fill="none" stroke="#a9b0b9" stroke-width="1.4"/><circle cx="5" cy="6" r="1.5" fill="none" stroke="#a9b0b9" stroke-width="1.2"/><circle cx="5" cy="10.5" r="1.5" fill="none" stroke="#a9b0b9" stroke-width="1.2"/><circle cx="12.5" cy="3.5" r="3" fill="#a9b0b9"/></svg><svg style="left:1365px;top:342px" width="14" height="8" viewBox="0 0 14 8"><path d="M1 1l6 6 6-6" fill="none" stroke="#a9b0b9" stroke-width="1.6"/></svg>
<div class="a" style="left:1105px;top:362px;width:276px;height:33px;border-radius:8px;border:1.5px solid #2e3237;background:#16181b"></div>
<svg style="left:1113px;top:372px" width="15" height="13" viewBox="0 0 15 13"><path d="M1 1.5h8.5M5.2 1.5V12.5M8.5 5.5h6M11.5 5.5V12.5" stroke="#8f98a3" stroke-width="2.2"/></svg><div class="t" style="left:1134px;top:372.5px;font-size:12.6px;font-weight:700;color:#e99a72">Unidades Documents<svg style="position:relative;display:inline-block;vertical-align:baseline;margin:0 4px 0 3px" width="14" height="8" viewBox="0 0 14 8"><path d="M0 4.5h12M9 1.5l3.5 3-3.5 3" fill="none" stroke="#e99a72" stroke-width="1.9"/></svg>Document ID</div>
<div class="t" style="left:1105px;top:407px;font-size:12.4px;color:#979ea7">Option Value Data Type</div>
<div class="a" style="left:1105px;top:424px;width:276px;height:32px;border-radius:8px;border:1.5px solid #2e3237;background:#16181b"></div>
<div class="t" style="left:1120px;top:435px;font-size:12.5px;font-weight:700;color:#fff">String</div>
<svg style="left:1353px;top:436px" width="14" height="8" viewBox="0 0 14 8"><path d="M1 1l6 6 6-6" fill="none" stroke="#c2c8d0" stroke-width="1.6"/></svg>
<div class="t" style="left:1105px;top:482px;font-size:12.6px;color:#979ea7">Add Option Labels</div>
<svg style="left:1217px;top:481px" width="12" height="12" viewBox="0 0 12 12"><circle cx="6" cy="6" r="5.2" fill="none" stroke="#6b737c" stroke-width="1.1"/><path d="M6 5.2v3.6" stroke="#6b737c" stroke-width="1.3"/><circle cx="6" cy="3.4" r=".75" fill="#6b737c"/></svg>
<div class="a" style="left:1339px;top:475px;width:42px;height:24px;border-radius:12px;background:#4b40e0"></div><div class="a" style="left:1357px;top:476px;width:22px;height:22px;border-radius:50%;background:#fff"></div>
<div class="t" style="left:1105px;top:522px;font-size:12px;font-weight:700;color:#fff">Define Options Labels</div>
<svg style="left:1238px;top:522px" width="12" height="12" viewBox="0 0 12 12"><circle cx="6" cy="6" r="5.2" fill="none" stroke="#6b737c" stroke-width="1.1"/><path d="M6 5.2v3.6" stroke="#6b737c" stroke-width="1.3"/><circle cx="6" cy="3.4" r=".75" fill="#6b737c"/></svg><svg style="left:1256px;top:521px" width="14" height="13" viewBox="0 0 14 13"><circle cx="3.5" cy="3" r="1.9" fill="none" stroke="#e3906a" stroke-width="1.2"/><circle cx="10.5" cy="10" r="1.9" fill="none" stroke="#e3906a" stroke-width="1.2"/><path d="M7.5 3h5M1.5 10h5" stroke="#e3906a" stroke-width="1.2"/></svg><svg style="left:1306px;top:520px" width="15" height="15" viewBox="0 0 15 15"><path d="M3.2 4A6 6 0 1 1 2 9.5" fill="none" stroke="#a9b0b9" stroke-width="1.5" stroke-linecap="round"/><path d="M2.5 1v3.5H6" fill="none" stroke="#a9b0b9" stroke-width="1.5" stroke-linecap="round" stroke-linejoin="round"/></svg><svg style="left:1330px;top:520px" width="16" height="16" viewBox="0 0 16 16"><path d="M9 1H4a3 3 0 0 0-3 3v8a3 3 0 0 0 3 3h8a3 3 0 0 0 3-3V8" fill="none" stroke="#a9b0b9" stroke-width="1.4"/><circle cx="5" cy="6" r="1.5" fill="none" stroke="#a9b0b9" stroke-width="1.2"/><circle cx="5" cy="10.5" r="1.5" fill="none" stroke="#a9b0b9" stroke-width="1.2"/><circle cx="12.5" cy="3.5" r="3" fill="#a9b0b9"/></svg><svg style="left:1365px;top:524px" width="14" height="8" viewBox="0 0 14 8"><path d="M1 1l6 6 6-6" fill="none" stroke="#a9b0b9" stroke-width="1.6"/></svg>
<div class="a" style="left:1105px;top:545px;width:276px;height:31px;border-radius:8px;border:1.5px solid #2e3237;background:#16181b"></div>
<svg style="left:1113px;top:554px" width="15" height="13" viewBox="0 0 15 13"><path d="M1 1.5h8.5M5.2 1.5V12.5M8.5 5.5h6M11.5 5.5V12.5" stroke="#8f98a3" stroke-width="2.2"/></svg><div class="t" style="left:1134px;top:555px;font-size:12.5px;font-weight:700;color:#e99a72">Unidades Documents<svg style="position:relative;display:inline-block;vertical-align:baseline;margin:0 4px 0 3px" width="14" height="8" viewBox="0 0 14 8"><path d="M0 4.5h12M9 1.5l3.5 3-3.5 3" fill="none" stroke="#e99a72" stroke-width="1.9"/></svg>short_name</div>
<div class="a" style="left:1093px;top:586px;width:300px;height:2px;background:#272b31"></div>
<div class="t" style="left:1105px;top:601px;font-size:12px;font-weight:700;color:#fff">Initial Configuration</div>
<svg style="left:1225px;top:601px" width="12" height="12" viewBox="0 0 12 12"><circle cx="6" cy="6" r="5.2" fill="none" stroke="#6b737c" stroke-width="1.1"/><path d="M6 5.2v3.6" stroke="#6b737c" stroke-width="1.3"/><circle cx="6" cy="3.4" r=".75" fill="#6b737c"/></svg><svg style="left:1365px;top:602px" width="14" height="8" viewBox="0 0 14 8"><path d="M1 1l6 6 6-6" fill="none" stroke="#a9b0b9" stroke-width="1.6"/></svg>
<div class="t" style="left:1105px;top:626px;font-size:12.5px;color:#979ea7">Initial Option Value</div>
<svg style="left:1214px;top:625px" width="14" height="13" viewBox="0 0 14 13"><circle cx="3.5" cy="3" r="1.9" fill="none" stroke="#e3906a" stroke-width="1.2"/><circle cx="10.5" cy="10" r="1.9" fill="none" stroke="#e3906a" stroke-width="1.2"/><path d="M7.5 3h5M1.5 10h5" stroke="#e3906a" stroke-width="1.2"/></svg>
<div class="a" style="left:1105px;top:643px;width:276px;height:33px;border-radius:8px;border:1.5px solid #2e3237;background:#16181b"></div>
<div class="t" style="left:1105px;top:686px;font-size:12.5px;color:#979ea7">Hint Text</div>
<svg style="left:1158px;top:685px" width="14" height="13" viewBox="0 0 14 13"><circle cx="3.5" cy="3" r="1.9" fill="none" stroke="#e3906a" stroke-width="1.2"/><circle cx="10.5" cy="10" r="1.9" fill="none" stroke="#e3906a" stroke-width="1.2"/><path d="M7.5 3h5M1.5 10h5" stroke="#e3906a" stroke-width="1.2"/></svg>
<div class="a" style="left:1105px;top:703px;width:276px;height:33px;border-radius:8px;border:1.5px solid #2e3237;background:#16181b"></div>
<div class="t" style="left:1118px;top:714px;font-size:12px;font-weight:700;color:#fff">Selecione sua Loja</div>
<div class="a" style="left:1093px;top:745px;width:300px;height:1px;background:#262a2f"></div>
<div class="t" style="left:1105px;top:761px;font-size:12.2px;font-weight:700;color:#fff">Disable Dropdown</div>
<svg style="left:1225px;top:761px" width="12" height="12" viewBox="0 0 12 12"><circle cx="6" cy="6" r="5.2" fill="none" stroke="#6b737c" stroke-width="1.1"/><path d="M6 5.2v3.6" stroke="#6b737c" stroke-width="1.3"/><circle cx="6" cy="3.4" r=".75" fill="#6b737c"/></svg>
<div class="a" style="left:1339px;top:757px;width:42px;height:24px;border-radius:12px;background:#1e2226;border:1px solid #2a2e33"></div><div class="a" style="left:1341px;top:759px;width:20px;height:20px;border-radius:50%;background:#2f3439"></div>
<div class="a" style="left:1325px;top:702px;width:48px;height:48px;border-radius:50%;background:#5046e5"></div>
<svg style="left:1335px;top:712px" width="28" height="28" viewBox="0 0 28 28"><circle cx="12" cy="12" r="9" fill="none" stroke="#fff" stroke-width="2.6"/><path d="M8 13.5c2 2 6 2 8 0" fill="none" stroke="#fff" stroke-width="2" stroke-linecap="round"/><path d="M18.5 18.5l6 6" stroke="#fff" stroke-width="3.2" stroke-linecap="round"/></svg>
<div class="a" style="left:1083px;top:705px;width:8px;height:64px;background:#2f353d"></div>


<!-- ISSUES POPUP -->
<div class="a" style="left:877px;top:58px;width:40px;height:36px;border-radius:8px;background:#17191c"></div>
<div class="a" style="left:888px;top:71px;width:2px;height:2px;background:#bbb"></div>
<div class="a" style="left:888px;top:76px;width:2px;height:2px;background:#ddd"></div>
<div class="a" style="left:892px;top:49px;width:300px;height:164px;border-radius:0 0 9px 9px;background:#17191c;box-shadow:0 4px 10px rgba(0,0,0,0.35)"></div>
<svg style="left:908px;top:63px" width="15" height="16" viewBox="0 0 15 16"><path d="M7.5 4.5c2 0 3.4 1.8 3.4 4.6s-1.4 5.4-3.4 5.4-3.4-2.6-3.4-5.4S5.5 4.5 7.5 4.5z" fill="none" stroke="#fff" stroke-width="1.4"/><path d="M7.5 5.5v9M5 1.5l1.2 2.5M10 1.5L8.8 4M1 8.5h3M11 8.5h3M1.8 4.5l2.5 1.8M13.2 4.5l-2.5 1.8M1.8 13l2.5-1.8M13.2 13l-2.5-1.8" stroke="#fff" stroke-width="1.3" stroke-linecap="round"/></svg>
<div class="t" style="left:933px;top:64px;font-size:13.5px;font-weight:700;color:#fff">Issues</div>
<div class="t" style="left:982px;top:65px;font-size:12.7px;color:#979ea7">(5 total)</div>
<svg style="left:1161px;top:65px" width="13" height="13" viewBox="0 0 13 13"><path d="M1 1l11 11M12 1L1 12" stroke="#a0a7b0" stroke-width="1.8"/></svg>
<div class="a" style="left:909px;top:94px;width:264px;height:36px;border-radius:9px;background:#1f2428"></div>
<div class="a" style="left:1041px;top:94.5px;width:132px;height:33px;border-radius:8px;background:#0e1012"></div>
<div class="t" style="left:945px;top:104px;font-size:13.7px;color:#959ca5">Warnings</div>
<div class="a" style="left:1014px;top:102px;width:18px;height:18px;border-radius:50%;background:#f5a132"></div>
<div class="t" style="left:1020px;top:106px;font-size:10.5px;font-weight:700;color:#fff">1</div>
<div class="t" style="left:1088px;top:104px;font-size:14px;font-weight:700;color:#fff;letter-spacing:-0.7px">Errors</div>
<div class="a" style="left:1145px;top:102px;width:18px;height:18px;border-radius:50%;background:#e04646"></div>
<div class="t" style="left:1151px;top:106px;font-size:10.5px;font-weight:700;color:#fff">1</div>
<div class="a" style="left:892px;top:141px;width:300px;height:1.5px;background:#353b43"></div>
<div class="a" style="left:892px;top:142px;width:300px;height:71px;border-radius:0 0 9px 9px;background:#1e2226"></div>
<div class="a" style="left:898px;top:152px;width:3.5px;height:53px;border-radius:2px;background:#e04a4a"></div>
<div class="t" style="left:916px;top:153px;font-size:12.5px;font-weight:700;color:#fff">Firestore Update</div>
<div class="t" style="left:916px;top:174px;font-size:12.5px;color:#959ca5">Field "store_docRef" is not properly set in</div>
<div class="t" style="left:916px;top:190px;font-size:12.5px;color:#959ca5">Database action for Button</div>

<!-- RED BOXES -->
<div class="a" style="left:843px;top:81px;width:354px;height:151px;border:3.5px solid #e5100f"></div>
<div class="a" style="left:1078px;top:320px;width:307px;height:67px;border:3.5px solid #e5100f"></div>
<div class="a" style="left:1058px;top:391px;width:330px;height:74px;border:3.5px solid #e5100f"></div>
<div class="a" style="left:1070px;top:502px;width:315px;height:96px;border:3.5px solid #e5100f"></div>

</body>
</html>
